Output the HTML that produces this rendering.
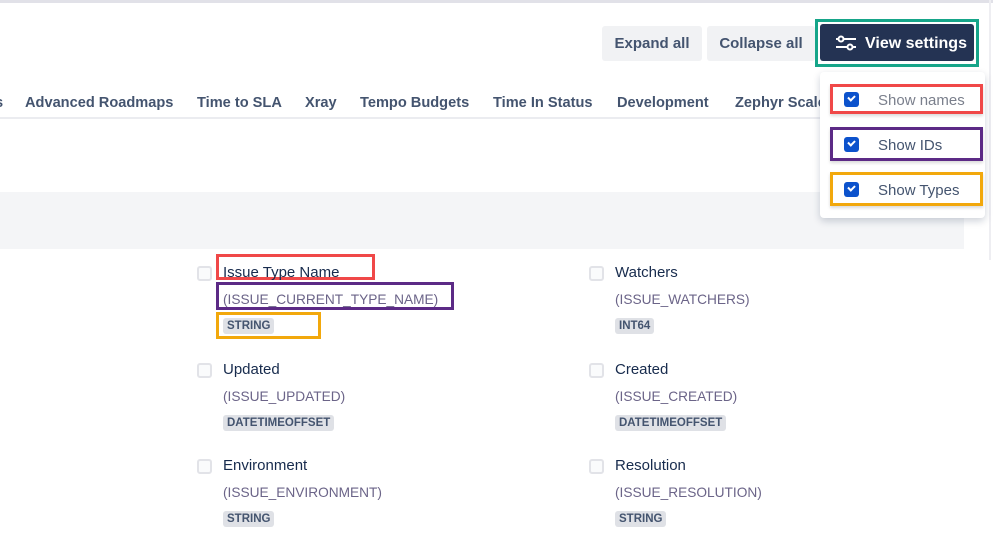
<!DOCTYPE html>
<html><head><meta charset="utf-8"><style>
*{box-sizing:border-box;margin:0;padding:0}
body{width:993px;height:547px;background:#fff;font-family:"Liberation Sans",sans-serif;color:#172b4d;position:relative;overflow:hidden}
.a{position:absolute;white-space:nowrap}
.btn{position:absolute;top:26px;height:35px;background:#f1f2f4;border-radius:3px;font-size:15px;color:#44546f;font-weight:bold;line-height:36px;text-align:center}
.tab{position:absolute;top:95px;font-size:14.6px;color:#44546f;font-weight:bold}
.cb{position:absolute;width:15px;height:15px;border:2px solid #e2e3e8;border-radius:3px;background:#fafbfc}
.nm{font-size:15px;color:#172b4d}
.id{font-size:13.7px;color:#6b6488}
.ty{position:absolute;background:#dfe1e6;color:#44546f;font-size:11.5px;font-weight:bold;padding:0 4px;height:16px;line-height:16px;border-radius:3px}
.chk{position:absolute;width:15px;height:15px;background:#0c52cc;border-radius:3px}
.chk:after{content:"";position:absolute;left:4px;top:3px;width:5px;height:3px;border-left:2px solid #fff;border-bottom:2px solid #fff;transform:rotate(-45deg)}
.opt{position:absolute;font-size:15px;color:#7a7f8c}
</style></head><body>
<div class="a" style="left:0;top:0;width:993px;height:3px;background:#e1e1e8"></div>
<div class="a" style="left:989px;top:0;width:2px;height:260px;background:#eeeef2"></div>
<div class="btn" style="left:602px;width:100px">Expand all</div>
<div class="btn" style="left:707px;width:108px">Collapse all</div>
<div class="a" style="left:815px;top:19px;width:164px;height:48px;border:3px solid #16a589"></div>
<div class="a" style="left:820px;top:24px;width:154px;height:37px;background:#243353;border-radius:3px;color:#fff;font-weight:bold;font-size:16px;line-height:39px;padding-left:45px">View settings</div>
<svg class="a" style="left:835px;top:35px" width="22" height="16" viewBox="0 0 22 16"><g stroke="#fff" stroke-width="2" fill="none"><line x1="1" y1="4" x2="21" y2="4"/><line x1="1" y1="12" x2="21" y2="12"/><circle cx="6" cy="4" r="2.5" fill="#243353"/><circle cx="15" cy="12" r="2.5" fill="#243353"/></g></svg>

<div class="tab" style="left:-5px">s</div>
<div class="tab" style="left:25px">Advanced Roadmaps</div>
<div class="tab" style="left:197px">Time to SLA</div>
<div class="tab" style="left:305px">Xray</div>
<div class="tab" style="left:360px">Tempo Budgets</div>
<div class="tab" style="left:493px">Time In Status</div>
<div class="tab" style="left:617px">Development</div>
<div class="tab" style="left:735px">Zephyr Scale</div>
<div class="a" style="left:0;top:117px;width:820px;height:2px;background:#ebecf0"></div>

<div class="a" style="left:0;top:192px;width:964px;height:57px;background:#f4f5f7"></div>

<div class="a" style="left:820px;top:72px;width:165px;height:146px;background:#fff;border-radius:4px;box-shadow:0 3px 8px rgba(9,30,66,.2)"></div>
<div class="a" style="left:830px;top:84px;width:153px;height:30px;border:3px solid #f04848;box-shadow:0 2px 3px rgba(0,0,0,.15)"></div>
<div class="a" style="left:830px;top:127px;width:153px;height:34px;border:3px solid #5c2a86;box-shadow:0 2px 3px rgba(0,0,0,.15)"></div>
<div class="a" style="left:830px;top:172px;width:153px;height:34px;border:3px solid #f2a80c;box-shadow:0 2px 3px rgba(0,0,0,.15)"></div>
<div class="chk" style="left:844px;top:92px"></div><div class="opt" style="left:878px;top:92px">Show names</div>
<div class="chk" style="left:844px;top:137px"></div><div class="opt" style="left:878px;top:137px;color:#44546f">Show IDs</div>
<div class="chk" style="left:844px;top:182px"></div><div class="opt" style="left:878px;top:182px;color:#44546f">Show Types</div>

<!-- col1 -->
<div class="cb" style="left:197px;top:266px"></div>
<div class="a" style="left:216px;top:254px;width:159px;height:26px;border:3px solid #f04848"></div>
<div class="a nm" style="left:223px;top:264px">Issue Type Name</div>
<div class="a" style="left:216px;top:282px;width:238px;height:28px;border:3px solid #5c2a86"></div>
<div class="a id" style="left:223px;top:292px">(ISSUE_CURRENT_TYPE_NAME)</div>
<div class="a" style="left:216px;top:312px;width:105px;height:27px;border:3px solid #f2a80c"></div>
<div class="ty" style="left:223px;top:318px">STRING</div>

<div class="cb" style="left:197px;top:363px"></div>
<div class="a nm" style="left:223px;top:361px">Updated</div>
<div class="a id" style="left:223px;top:389px">(ISSUE_UPDATED)</div>
<div class="ty" style="left:223px;top:415px">DATETIMEOFFSET</div>

<div class="cb" style="left:197px;top:459px"></div>
<div class="a nm" style="left:223px;top:457px">Environment</div>
<div class="a id" style="left:223px;top:485px">(ISSUE_ENVIRONMENT)</div>
<div class="ty" style="left:223px;top:511px">STRING</div>

<!-- col2 -->
<div class="cb" style="left:589px;top:266px"></div>
<div class="a nm" style="left:615px;top:264px">Watchers</div>
<div class="a id" style="left:615px;top:292px">(ISSUE_WATCHERS)</div>
<div class="ty" style="left:615px;top:318px">INT64</div>

<div class="cb" style="left:589px;top:363px"></div>
<div class="a nm" style="left:615px;top:361px">Created</div>
<div class="a id" style="left:615px;top:389px">(ISSUE_CREATED)</div>
<div class="ty" style="left:615px;top:415px">DATETIMEOFFSET</div>

<div class="cb" style="left:589px;top:459px"></div>
<div class="a nm" style="left:615px;top:457px">Resolution</div>
<div class="a id" style="left:615px;top:485px">(ISSUE_RESOLUTION)</div>
<div class="ty" style="left:615px;top:511px">STRING</div>
</body></html>
